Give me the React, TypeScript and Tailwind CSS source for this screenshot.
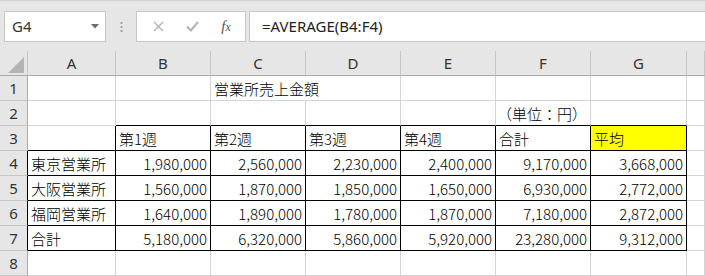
import React from "react";

const COLS = ["A", "B", "C", "D", "E", "F", "G", "H"];

type Cell = { t?: string; align?: "l" | "r"; yellow?: boolean };

const data: Record<number, Record<string, Cell>> = {
  1: { C: { t: "営業所売上金額", align: "l" } },
  2: { F: { t: "（単位：円）", align: "r" } },
  3: {
    B: { t: "第1週" },
    C: { t: "第2週" },
    D: { t: "第3週" },
    E: { t: "第4週" },
    F: { t: "合計" },
    G: { t: "平均", yellow: true },
  },
};

const rowsData: [number, string, string[]][] = [
  [4, "東京営業所", ["1,980,000", "2,560,000", "2,230,000", "2,400,000", "9,170,000", "3,668,000"]],
  [5, "大阪営業所", ["1,560,000", "1,870,000", "1,850,000", "1,650,000", "6,930,000", "2,772,000"]],
  [6, "福岡営業所", ["1,640,000", "1,890,000", "1,780,000", "1,870,000", "7,180,000", "2,872,000"]],
  [7, "合計", ["5,180,000", "6,320,000", "5,860,000", "5,920,000", "23,280,000", "9,312,000"]],
];
rowsData.forEach(([r, label, nums]) => {
  data[r] = { A: { t: label } };
  ["B", "C", "D", "E", "F", "G"].forEach((c, i) => {
    data[r][c] = { t: nums[i], align: "r" };
  });
});

const inTableBG = (c: string) => ["B", "C", "D", "E", "F", "G"].includes(c);

function rightBlack(r: number, c: string) {
  if (r >= 3 && r <= 7 && inTableBG(c)) return true;
  if (r >= 3 && r <= 7 && c === "A") return true;
  return false;
}
function bottomBlack(r: number, c: string) {
  if (r >= 2 && r <= 7 && inTableBG(c)) return true;
  if (r >= 3 && r <= 7 && c === "A") return true;
  return false;
}

function SheetCell({ r, c }: { r: number; c: string }) {
  const cell = data[r]?.[c];
  const rb = rightBlack(r, c);
  const bb = bottomBlack(r, c);
  const hideRight = r === 1 && c === "C";
  const rightCls = hideRight
    ? "border-r-transparent"
    : rb
    ? "border-r-black"
    : "border-r-[#d4d4d4]";
  const bottomCls = bb ? "border-b-black" : "border-b-[#d4d4d4]";
  const bg = cell?.yellow ? "bg-[#ffff00]" : "";
  const align = cell?.align === "r" ? "justify-end" : "justify-start";
  return (
    <div
      className={`h-[25px] border-r border-b ${rightCls} ${bottomCls} ${bg} flex items-center ${align} px-[3px] overflow-visible whitespace-nowrap text-[15px] font-light text-black relative`}
    >
      {cell?.t ? <span className="relative z-10 leading-none">{cell.t}</span> : null}
    </div>
  );
}

export default function App() {
  const rows = [1, 2, 3, 4, 5, 6, 7, 8];
  return (
    <div
      className="w-[705px] h-[276px] overflow-hidden bg-[#e6e6e6] relative"
      style={{ fontFamily: '"Noto Sans CJK JP", "Noto Sans", sans-serif' }}
    >
      {/* Formula bar area */}
      <div className="h-[51px] border-t border-t-[#d2d2d2] flex items-start pt-[10px] pl-[4px]">
        <div className="w-[102px] h-[31px] bg-white border border-[#c6c6c6] flex items-center justify-between pl-[7px] pr-[6px]">
          <span
            className="text-[15px] text-[#333]"
            style={{ fontFamily: '"Noto Sans", "Liberation Sans", sans-serif' }}
          >
            G4
          </span>
          <svg width="8" height="5" viewBox="0 0 8 5">
            <path d="M0 0 L8 0 L4 4.5 Z" fill="#6b6b6b" />
          </svg>
        </div>
        <div className="w-[30px] h-[31px] flex items-center justify-center">
          <svg width="3" height="10" viewBox="0 0 3 10">
            <rect x="0.5" y="0" width="2" height="2" fill="#a6a6a6" />
            <rect x="0.5" y="4" width="2" height="2" fill="#a6a6a6" />
            <rect x="0.5" y="8" width="2" height="2" fill="#a6a6a6" />
          </svg>
        </div>
        <div className="w-[110px] h-[31px] bg-white border border-[#c6c6c6] flex items-center">
          <div className="w-[38px] flex justify-center pl-[4px]">
            <svg width="11" height="11" viewBox="0 0 11 11">
              <path d="M1 1 L10 10 M10 1 L1 10" stroke="#b3b3b3" strokeWidth="1.4" />
            </svg>
          </div>
          <div className="w-[34px] flex justify-center">
            <svg width="13" height="11" viewBox="0 0 13 11">
              <path d="M1 5.5 L4.8 9.5 L12 1" stroke="#b3b3b3" strokeWidth="2" fill="none" />
            </svg>
          </div>
          <div className="w-[34px] flex justify-center">
            <span
              className="italic text-[15px] text-[#555] leading-none"
              style={{ fontFamily: '"Liberation Serif", serif' }}
            >
              f<span className="text-[12px]">x</span>
            </span>
          </div>
        </div>
        <div className="ml-[3px] flex-1 h-[31px] bg-white border border-[#c6c6c6] border-r-0 flex items-center pl-[12px]">
          <span
            className="text-[15px] text-[#222]"
            style={{ fontFamily: '"Noto Sans", "Liberation Sans", sans-serif' }}
          >
            =AVERAGE(B4:F4)
          </span>
        </div>
      </div>

      {/* Sheet */}
      <div className="grid grid-cols-[28px_88px_95px_95px_95px_95px_95px_96px_1fr] bg-white">
        {/* header row */}
        <div className="h-[25px] bg-[#e6e6e6] border-r border-b border-r-[#c6c6c6] border-b-[#ababab] relative">
          <svg className="absolute left-[8px] top-[6px]" width="16" height="16" viewBox="0 0 16 16">
            <path d="M16 0 L16 16 L0 16 Z" fill="#b4b4b4" />
          </svg>
        </div>
        {COLS.map((c) => (
          <div
            key={c}
            className="h-[25px] bg-[#e6e6e6] border-r border-b border-r-[#c6c6c6] border-b-[#ababab] flex items-center justify-center text-[15px] text-[#333]"
            style={{ fontFamily: '"Noto Sans", "Liberation Sans", sans-serif' }}
          >
            {c === "H" ? "" : c}
          </div>
        ))}
        {rows.map((r) => (
          <React.Fragment key={r}>
            <div
              className={`h-[25px] bg-[#e6e6e6] border-r border-b border-b-[#c6c6c6] ${
                r >= 4 && r <= 7 ? "border-r-black" : "border-r-[#ababab]"
              } flex items-center justify-center text-[15px] text-[#333]`}
              style={{ fontFamily: '"Noto Sans", "Liberation Sans", sans-serif' }}
            >
              {r}
            </div>
            {COLS.map((c) => (
              <SheetCell key={c} r={r} c={c} />
            ))}
          </React.Fragment>
        ))}
      </div>
    </div>
  );
}
